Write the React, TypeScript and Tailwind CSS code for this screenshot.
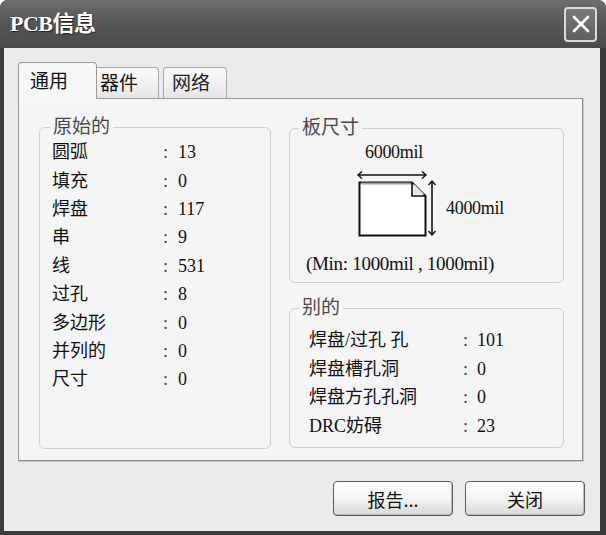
import React from "react";

const prim: [string, string][] = [
  ["圆弧", "13"],
  ["填充", "0"],
  ["焊盘", "117"],
  ["串", "9"],
  ["线", "531"],
  ["过孔", "8"],
  ["多边形", "0"],
  ["并列的", "0"],
  ["尺寸", "0"],
];

const other: [string, string][] = [
  ["焊盘/过孔 孔", "101"],
  ["焊盘槽孔洞", "0"],
  ["焊盘方孔孔洞", "0"],
  ["DRC妨碍", "23"],
];

function BoardIcon() {
  return (
    <svg width="82" height="66" viewBox="0 0 82 66" className="shrink-0">
      <line x1="3" y1="4" x2="71" y2="4" stroke="#111" strokeWidth="1.6" />
      <path d="M7 0.5 L3 4 L7 7.5" fill="none" stroke="#111" strokeWidth="1.4" />
      <path d="M67 0.5 L71 4 L67 7.5" fill="none" stroke="#111" strokeWidth="1.4" />
      <path d="M4.5 11.5 L57 11.5 L70.5 25 L70.5 64.5 L4.5 64.5 Z" fill="#fff" stroke="#111" strokeWidth="2" />
      <line x1="6" y1="12.5" x2="56" y2="12.5" stroke="#9a9a9a" strokeWidth="2" />
      <path d="M57 11.5 L57 25 L70.5 25" fill="none" stroke="#111" strokeWidth="1.6" />
      <path d="M58.5 12.5 L69.5 23.5 L58.5 23.5 Z" fill="#e4e4e4" />
      <line x1="77" y1="10" x2="77" y2="64" stroke="#111" strokeWidth="1.6" />
      <path d="M73.5 14 L77 10 L80.5 14" fill="none" stroke="#111" strokeWidth="1.4" />
      <path d="M73.5 60 L77 64 L80.5 60" fill="none" stroke="#111" strokeWidth="1.4" />
    </svg>
  );
}

export default function App() {
  return (
    <div className="w-[606px] h-[535px] bg-[#3b3b3b] rounded-t-[8px] flex flex-col overflow-hidden font-['Liberation_Serif','Noto_Sans_CJK_SC',serif] text-[#111]">
      {/* title bar */}
      <div className="h-[48px] shrink-0 flex items-center pl-[10px] pr-[9px] bg-linear-to-b from-[#6e6e6e] via-[#555] to-[#4a4a4a]">
        <span className="text-white font-bold text-[22px] leading-none tracking-[-0.5px] [text-shadow:1px_1px_1px_#222]">
          PCB信息
        </span>
        <div className="ml-auto w-[33px] h-[35px] rounded-[4px] border-2 border-[#dadada] bg-linear-to-b from-[#7a7a7a] to-[#5e5e5e] flex items-center justify-center">
          <svg width="20" height="20" viewBox="0 0 20 20">
            <path d="M3 3 L17 17 M17 3 L3 17" stroke="#fff" strokeWidth="2.6" strokeLinecap="round" />
          </svg>
        </div>
      </div>

      {/* client area */}
      <div className="flex-1 ml-[4px] mr-[6px] mb-[4px] bg-[#ebebeb] flex flex-col px-[14px] pt-[14px]">
        {/* tab strip */}
        <div className="flex items-end h-[36px] font-['Noto_Sans_CJK_SC',sans-serif] text-[19px]">
          <div className="relative z-10 -mb-px w-[79px] h-[37px] bg-[#f7f7f7] border border-b-0 border-[#9a9a9a] rounded-t-[4px] pl-[11px] pt-[5px] leading-[24px]">
            通用
          </div>
          <div className="w-[62px] h-[31px] bg-linear-to-b from-[#fafafa] to-[#e6e6e6] border border-l-0 border-b-0 border-[#a8a8a8] rounded-tr-[4px] pl-[3px] pt-[2px] leading-[24px]">
            器件
          </div>
          <div className="ml-[4px] w-[64px] h-[31px] bg-linear-to-b from-[#fafafa] to-[#e6e6e6] border border-b-0 border-[#a8a8a8] rounded-t-[4px] pl-[8px] pt-[2px] leading-[24px] text-[#222]">
            网络
          </div>
        </div>

        {/* tab panel */}
        <div className="w-[565px] h-[363px] bg-[#f5f5f5] border border-[#9a9a9a] border-r-[#8a8a8a] border-b-[#8a8a8a] shadow-[1px_1px_0_#c8c8c8] flex pl-[20px] pt-[28px]">
          {/* 原始的 */}
          <div className="relative w-[232px] h-[322px] border border-[#cfcfcf] rounded-[6px] pt-[10px] pl-[12px]">
            <span className="absolute -top-[12px] left-[10px] px-[3px] bg-[#f5f5f5] text-[#4a4a4a] text-[19px] leading-[22px]">
              原始的
            </span>
            {prim.map(([k, v]) => (
              <div key={k} className="flex items-center h-[28.4px] text-[18px] leading-none">
                <span className="w-[111px]">{k}</span>
                <span className="w-[15px] text-[#444]">:</span>
                <span>{v}</span>
              </div>
            ))}
          </div>

          {/* right column */}
          <div className="ml-[18px] w-[275px] flex flex-col">
            {/* 板尺寸 */}
            <div className="relative mt-[1px] h-[155px] border border-[#cfcfcf] rounded-[6px] flex flex-col">
              <span className="absolute -top-[12px] left-[9px] px-[3px] bg-[#f5f5f5] text-[#4a4a4a] text-[19px] leading-[22px]">
                板尺寸
              </span>
              <div className="mt-[13px] pl-[75px] text-[18px] leading-[20px] tracking-[-0.3px]">6000mil</div>
              <div className="mt-[9px] flex items-center pl-[65px]">
                <BoardIcon />
                <span className="ml-[9px] mt-[8px] text-[18px] leading-[20px] tracking-[-0.3px]">4000mil</span>
              </div>
              <div className="mt-[17px] pl-[16px] text-[19px] leading-[20px] tracking-[-0.3px]">
                (Min: 1000mil , 1000mil)
              </div>
            </div>

            {/* 别的 */}
            <div className="relative mt-[25px] h-[140px] border border-[#cfcfcf] rounded-[6px] pt-[17px] pl-[19px]">
              <span className="absolute -top-[12px] left-[9px] px-[3px] bg-[#f5f5f5] text-[#4a4a4a] text-[19px] leading-[22px]">
                别的
              </span>
              {other.map(([k, v]) => (
                <div key={k} className="flex items-center h-[28.5px] text-[18px] leading-none">
                  <span className="w-[154px]">{k}</span>
                  <span className="w-[14px] text-[#444]">:</span>
                  <span>{v}</span>
                </div>
              ))}
            </div>
          </div>
        </div>

        {/* buttons */}
        <div className="mt-[20px] flex justify-end gap-[12px] pr-[1px] font-['Noto_Sans_CJK_SC',sans-serif] text-[18px]">
          <button className="w-[120px] h-[35px] rounded-[4px] border border-[#5a5a5a] bg-linear-to-b from-[#ffffff] via-[#f4f4f4] to-[#d8d8d8] shadow-[inset_-1px_-1px_0_#bbb] leading-none">
            报告...
          </button>
          <button className="w-[120px] h-[35px] rounded-[4px] border border-[#5a5a5a] bg-linear-to-b from-[#ffffff] via-[#f4f4f4] to-[#d8d8d8] shadow-[inset_-1px_-1px_0_#bbb] leading-none">
            关闭
          </button>
        </div>
      </div>
    </div>
  );
}
